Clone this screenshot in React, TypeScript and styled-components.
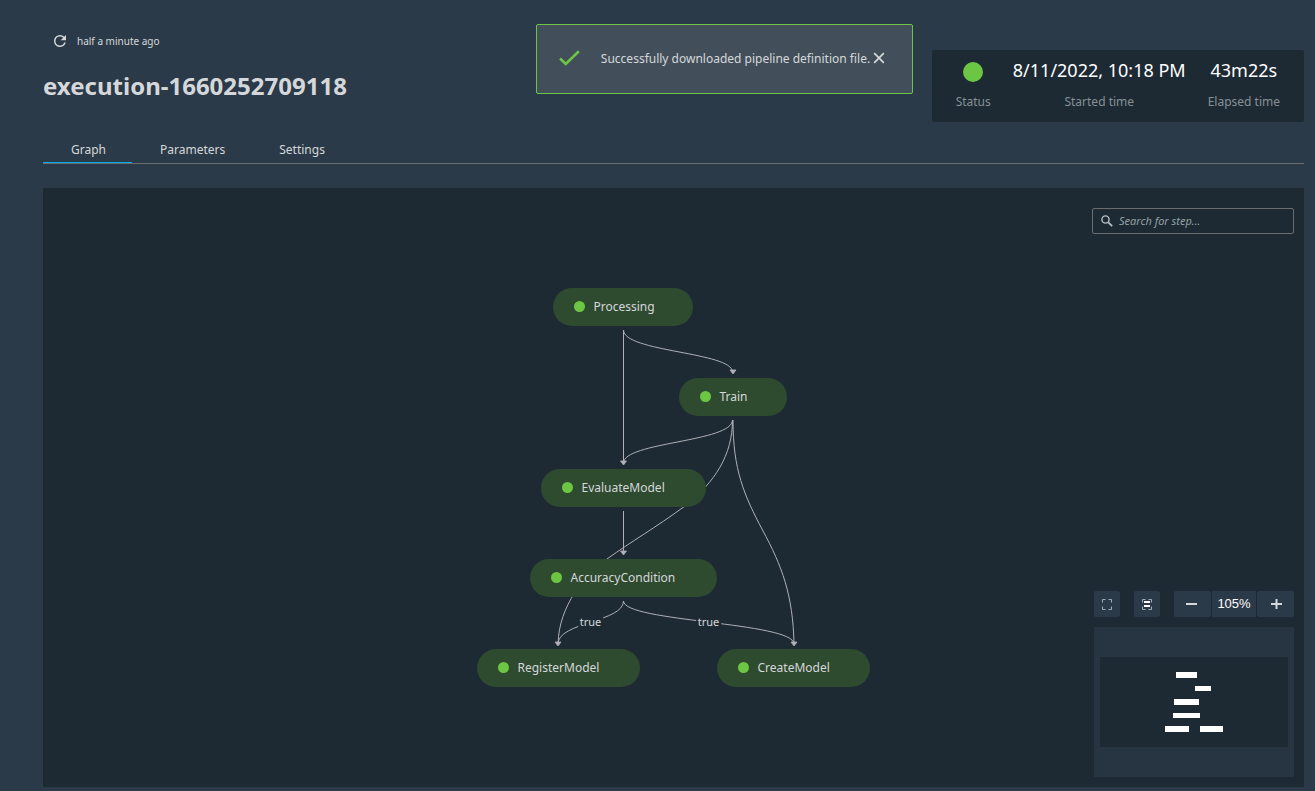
import React from 'react';
import styled, { createGlobalStyle } from 'styled-components';

const color = {
  page: '#2b3a48',
  panel: '#1d2a34',
  raised: '#263541',
  text: '#d5d8da',
  muted: '#879094',
  line: '#6a6c6e',
  edge: '#b0b0b6',
  green: '#6cc644',
  node: '#2e4a2f',
  blue: '#00aee3',
};

const GlobalStyle = createGlobalStyle`
  * { box-sizing: border-box; }
  body {
    margin: 0;
    background: ${color.page};
    color: ${color.text};
    font-family: 'Noto Sans', sans-serif;
  }
  button, input { font: inherit; color: inherit; }
  button { border: 0; padding: 0; background: none; cursor: pointer; }
`;

const Page = styled.div`
  position: relative;
  display: flex;
  flex-direction: column;
  min-height: 100vh;
  padding: 0 11px 4px 43px;
`;

const Header = styled.header`
  display: flex;
  justify-content: space-between;
  align-items: flex-start;
  height: 136px;
`;

const Heading = styled.div`
  padding-top: 32px;
`;

const Refresh = styled.div`
  display: flex;
  align-items: center;
  gap: 8px;
  padding-left: 8px;
  font-size: 10px;
  line-height: 18px;
`;

const IconButton = styled.button`
  display: grid;
  place-items: center;
  width: 18px;
  height: 18px;
`;

const Title = styled.h1`
  margin: 20px 0 0;
  font-size: 24px;
  line-height: 32px;
  font-weight: 700;
`;

const Summary = styled.dl`
  display: flex;
  gap: 22px;
  margin: 50px 0 0;
  padding: 8px 24px;
  height: 72px;
  border-radius: 2px;
  background: ${color.panel};
`;

const Stat = styled.div`
  display: flex;
  flex-direction: column-reverse;
  justify-content: flex-end;
  align-items: center;
  gap: 8px;
`;

const StatLabel = styled.dt`
  font-size: 12px;
  line-height: 24px;
  color: ${color.muted};
`;

const StatValue = styled.dd`
  display: flex;
  align-items: center;
  height: 24px;
  margin: 0;
  font-size: 18px;
  color: #fff;
`;

const StatusDot = styled.span`
  width: 20px;
  height: 20px;
  margin-top: 4px;
  border-radius: 50%;
  background: ${color.green};
`;

const Toast = styled.div`
  position: absolute;
  top: 24px;
  right: 402px;
  display: flex;
  align-items: center;
  width: 377px;
  height: 70px;
  padding: 0 24px 2px 22px;
  border: 1px solid ${color.green};
  border-radius: 2px;
  background: #424f5a;
  font-size: 12px;
`;

const ToastText = styled.p`
  flex: 1;
  margin: 0 0 0 21px;
  white-space: nowrap;
`;

const Tabs = styled.div`
  display: flex;
  height: 28px;
  border-bottom: 1px solid ${color.line};
`;

const Tab = styled.button<{ $active?: boolean }>`
  padding: 2px 26px 0 28px;
  border-bottom: 1px solid ${(p) => (p.$active ? color.blue : 'transparent')};
  font-size: 12px;
  line-height: 24px;
`;

const GraphPanel = styled.main`
  position: relative;
  flex: 1;
  margin-top: 24px;
  padding: 100px 0;
  background: ${color.panel};
`;

const Canvas = styled.div`
  position: relative;
  width: 394px;
  height: 399px;
  margin: 0 auto;
`;

const Edges = styled.svg`
  position: absolute;
  inset: 0;
  overflow: visible;
`;

const Node = styled.div<{ $x: number; $y: number; $w: number }>`
  position: absolute;
  left: ${(p) => p.$x}px;
  top: ${(p) => p.$y}px;
  width: ${(p) => p.$w}px;
  height: 38px;
  display: flex;
  align-items: center;
  gap: 9px;
  padding: 0 0 2px 21px;
  border-radius: 19px;
  background: ${color.node};
  font-size: 12px;
  white-space: nowrap;
`;

const NodeDot = styled.span`
  width: 11px;
  height: 11px;
  border-radius: 50%;
  background: ${color.green};
`;

const EdgeLabel = styled.span<{ $x: number; $y: number }>`
  position: absolute;
  left: ${(p) => p.$x}px;
  top: ${(p) => p.$y}px;
  transform: translate(-50%, -50%);
  padding: 0 2px;
  background: ${color.panel};
  font-size: 11px;
  line-height: 14px;
`;

const Search = styled.label`
  position: absolute;
  top: 20px;
  right: 10px;
  display: flex;
  align-items: center;
  gap: 6px;
  width: 202px;
  height: 26px;
  padding: 0 8px;
  border: 1px solid ${color.line};
  border-radius: 2px;
`;

const SearchInput = styled.input`
  flex: 1;
  min-width: 0;
  padding: 0 0 2px;
  border: 0;
  outline: 0;
  background: none;
  font-size: 11px;
  &::placeholder {
    color: #95a0a3;
    font-style: italic;
    opacity: 1;
  }
`;

const Controls = styled.div`
  position: absolute;
  right: 10px;
  bottom: 10px;
  display: flex;
  flex-direction: column;
  gap: 10px;
  width: 200px;
`;

const Toolbar = styled.div`
  display: flex;
  justify-content: space-between;
`;

const ToolButton = styled.button<{ $wide?: boolean }>`
  display: grid;
  place-items: center;
  width: ${(p) => (p.$wide ? 37 : 26)}px;
  height: 26px;
  border-radius: 2px;
  background: ${color.page};
`;

const ZoomGroup = styled.div`
  display: flex;
  gap: 1px;
`;

const ZoomValue = styled.output`
  width: 44px;
  background: ${color.page};
  color: #fff;
  font-family: 'Liberation Sans', sans-serif;
  font-size: 13px;
  line-height: 26px;
  text-align: center;
`;

const Minimap = styled.div`
  padding: 30px 6px;
  background: ${color.raised};
`;

const MinimapView = styled.svg`
  display: block;
  width: 188px;
  height: 90px;
  background: ${color.panel};
`;

const nodes = [
  { name: 'Processing', x: 76, y: 0, w: 140 },
  { name: 'Train', x: 202, y: 90, w: 108 },
  { name: 'EvaluateModel', x: 64, y: 181, w: 165 },
  { name: 'AccuracyCondition', x: 53, y: 271, w: 187 },
  { name: 'RegisterModel', x: 0, y: 361, w: 163 },
  { name: 'CreateModel', x: 240, y: 361, w: 153 },
];

const edges = [
  'M146.5 42V176',
  'M146.5 42C146.5 64 255.5 64 255.5 84',
  'M255.5 132C255.5 154 146.5 154 146.5 175',
  'M146.5 223V266',
  'M255.5 132C255.5 167 238 194 208 218C178 240 155 253 130 271C108 287 82 317 81 356',
  'M256 132C256 182 267 207 285.5 242C305 278 316 307 317 356',
  'M146.5 313C146.5 334 81 334 81 356',
  'M146.5 313C146.5 334 317 334 317 356',
];

const arrows = [
  [256, 86],
  [146.5, 177],
  [146.5, 267],
  [81, 358],
  [317, 358],
];

const minimapBars = [
  [76, 15, 21, 6],
  [95, 29, 16, 5],
  [74, 42, 25, 6],
  [73, 56, 27, 5],
  [65, 69, 24, 6],
  [100, 69, 23, 6],
];

function RefreshIcon() {
  return (
    <svg width="18" height="18" viewBox="0 0 24 24" fill={color.text} aria-hidden="true">
      <path d="M17.65 6.35A7.96 7.96 0 0 0 12 4a8 8 0 1 0 7.73 10h-2.08A6 6 0 1 1 12 6c1.66 0 3.14.69 4.22 1.78L13 11h7V4z" />
    </svg>
  );
}

function SearchIcon() {
  return (
    <svg width="12" height="12" viewBox="0 0 12 12" fill="none" stroke="#b9c0c4" aria-hidden="true">
      <circle cx="4.5" cy="4.5" r="3.6" strokeWidth="1.4" />
      <path d="M7.3 7.3L11.2 11.2" strokeWidth="1.7" />
    </svg>
  );
}

function FrameCorners() {
  return <path d="M.5 3.5V.5H3.5M6.5 .5H9.5V3.5M9.5 7.5V10.5H6.5M3.5 10.5H.5V7.5" fill="none" stroke="#a3abb2" />;
}

export default function App() {
  return (
    <>
      <GlobalStyle />
      <Page>
        <Header>
          <Heading>
            <Refresh>
              <IconButton aria-label="Refresh">
                <RefreshIcon />
              </IconButton>
              half a minute ago
            </Refresh>
            <Title>execution-1660252709118</Title>
          </Heading>
          <Summary>
            <Stat>
              <StatLabel>Status</StatLabel>
              <StatValue>
                <StatusDot role="img" aria-label="Succeeded" />
              </StatValue>
            </Stat>
            <Stat>
              <StatLabel>Started time</StatLabel>
              <StatValue>8/11/2022, 10:18 PM</StatValue>
            </Stat>
            <Stat>
              <StatLabel>Elapsed time</StatLabel>
              <StatValue>43m22s</StatValue>
            </Stat>
          </Summary>
        </Header>

        <Tabs role="tablist">
          <Tab role="tab" aria-selected="true" $active>
            Graph
          </Tab>
          <Tab role="tab" aria-selected="false">
            Parameters
          </Tab>
          <Tab role="tab" aria-selected="false">
            Settings
          </Tab>
        </Tabs>

        <GraphPanel>
          <Canvas>
            <Edges width="394" height="399" fill="none" stroke={color.edge} aria-hidden="true">
              {edges.map((d) => (
                <path key={d} d={d} />
              ))}
              {arrows.map(([x, y]) => (
                <path key={`${x}-${y}`} d={`M${x - 3} ${y - 4}h6l-3 4z`} fill={color.edge} strokeWidth="0.8" />
              ))}
            </Edges>
            {nodes.map((n) => (
              <Node key={n.name} $x={n.x} $y={n.y} $w={n.w}>
                <NodeDot />
                {n.name}
              </Node>
            ))}
            <EdgeLabel $x={114} $y={334}>
              true
            </EdgeLabel>
            <EdgeLabel $x={232} $y={334}>
              true
            </EdgeLabel>
          </Canvas>

          <Search>
            <SearchIcon />
            <SearchInput type="text" placeholder="Search for step..." aria-label="Search for step" />
          </Search>

          <Controls>
            <Toolbar>
              <ToolButton aria-label="Full screen">
                <svg width="10" height="11" viewBox="0 0 10 11" aria-hidden="true">
                  <FrameCorners />
                </svg>
              </ToolButton>
              <ToolButton aria-label="Fit to view">
                <svg width="10" height="11" viewBox="0 0 10 11" aria-hidden="true">
                  <FrameCorners />
                  <path d="M2 2h6v2H2zM2 6h6v2H2z" fill="#fff" />
                </svg>
              </ToolButton>
              <ZoomGroup>
                <ToolButton $wide aria-label="Zoom out">
                  <svg width="13" height="12" viewBox="0 0 13 12" aria-hidden="true">
                    <path d="M0 5h11v2H0z" fill={color.text} />
                  </svg>
                </ToolButton>
                <ZoomValue>105%</ZoomValue>
                <ToolButton $wide aria-label="Zoom in">
                  <svg width="13" height="12" viewBox="0 0 13 12" aria-hidden="true">
                    <path d="M2 5h11v2H2zM6.5 1h2v10h-2z" fill={color.text} />
                  </svg>
                </ToolButton>
              </ZoomGroup>
            </Toolbar>
            <Minimap>
              <MinimapView viewBox="0 0 188 90" aria-hidden="true">
                {minimapBars.map(([x, y, w, h]) => (
                  <rect key={`${x}-${y}`} x={x} y={y} width={w} height={h} fill="#fff" />
                ))}
              </MinimapView>
            </Minimap>
          </Controls>
        </GraphPanel>

        <Toast role="status">
          <svg width="21" height="16" viewBox="0 0 21 16" fill="none" stroke={color.green} strokeWidth="2.6" aria-hidden="true">
            <path d="M1 8.5L6.8 14L20 1.2" />
          </svg>
          <ToastText>Successfully downloaded pipeline definition file.</ToastText>
          <IconButton aria-label="Dismiss">
            <svg width="12" height="12" viewBox="0 0 12 12" stroke={color.text} strokeWidth="1.7" aria-hidden="true">
              <path d="M1.2 1.2L10.8 10.8M10.8 1.2L1.2 10.8" />
            </svg>
          </IconButton>
        </Toast>
      </Page>
    </>
  );
}
